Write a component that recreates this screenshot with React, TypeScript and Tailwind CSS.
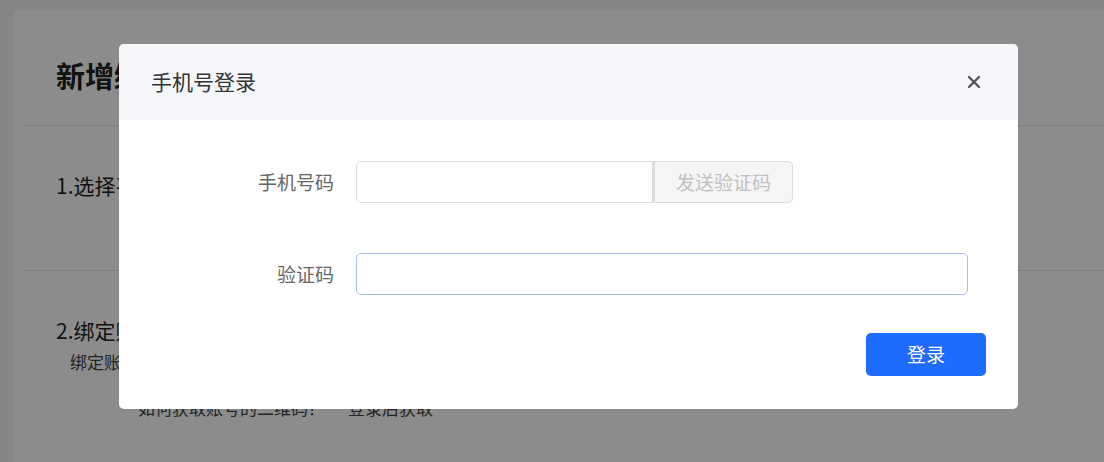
import React from "react";

export default function App() {
  const font = { fontFamily: '"Noto Sans CJK SC", "Noto Sans", sans-serif' };
  return (
    <div
      className="relative w-[1104px] h-[462px] overflow-hidden bg-[#f4f4f4] pl-[14px] pt-[10px]"
      style={font}
    >
      {/* background page card */}
      <div className="w-[1120px] h-[500px] bg-white rounded-[4px] pt-[45px] text-[#222]">
        <div className="pl-[42px] h-[40px] leading-[40px] text-[29px] font-bold">新增绑定账号</div>
        <div className="mt-[30px] ml-2 h-px bg-[#e6e6e6]" />
        <div className="pl-[42px] pt-[44px] h-[30px] leading-[30px] text-[21px] box-content">1.选择平台类型</div>
        <div className="mt-[70px] ml-2 h-px bg-[#e6e6e6]" />
        <div className="pl-[42px] pt-[44px] h-[30px] leading-[30px] text-[21px] box-content">2.绑定账号</div>
        <div className="pl-[56px] mt-[5px] h-[24px] leading-[24px] text-[17px] text-[#444]">绑定账号时请扫码登录</div>
        <div className="pl-[124px] mt-[22px] h-[24px] leading-[24px] text-[17px] text-[#444] flex gap-[23px]">
          <span>如何获取账号的二维码？</span>
          <span>登录后获取</span>
        </div>
      </div>

      {/* overlay */}
      <div className="absolute inset-0 bg-black/45" />

      {/* modal */}
      <div className="absolute left-[119px] top-[44px] w-[899px] h-[365px] bg-white rounded-[5px] overflow-hidden flex flex-col">
        <div className="h-[76px] bg-[#f5f6fa] flex items-center justify-between pl-[32px] pr-[37px]">
          <span className="text-[21px] text-[#333]">手机号登录</span>
          <svg width="14" height="14" viewBox="0 0 14 14">
            <path d="M2 2 L12 12 M12 2 L2 12" stroke="#555" strokeWidth="2.4" strokeLinecap="round" />
          </svg>
        </div>
        <div className="flex-1 flex flex-col pt-[41px] pr-[32px]">
          <div className="flex items-center h-[42px]">
            <div className="w-[215px] text-right text-[19px] text-[#666]">手机号码</div>
            <div className="ml-[22px] flex h-[42px]">
              <div className="w-[297px] h-full border border-[#dcdcdc] rounded-l-[5px] bg-white" />
              <div className="w-[140px] h-full border border-l-2 border-[#dcdcdc] rounded-r-[5px] bg-[#f5f5f5] flex items-center justify-center text-[19px] text-[#c0c0c0]">
                发送验证码
              </div>
            </div>
          </div>
          <div className="flex items-center h-[42px] mt-[50px]">
            <div className="w-[215px] text-right text-[19px] text-[#666]">验证码</div>
            <div className="ml-[22px] w-[612px] h-[42px] border-[1.5px] border-[#a9bef0] rounded-[5px] bg-white" />
          </div>
          <div className="flex justify-end mt-[38px]">
            <div className="w-[120px] h-[43px] bg-[#1e6bff] rounded-[5px] flex items-center justify-center text-[19px] text-white">
              登录
            </div>
          </div>
        </div>
      </div>
    </div>
  );
}
